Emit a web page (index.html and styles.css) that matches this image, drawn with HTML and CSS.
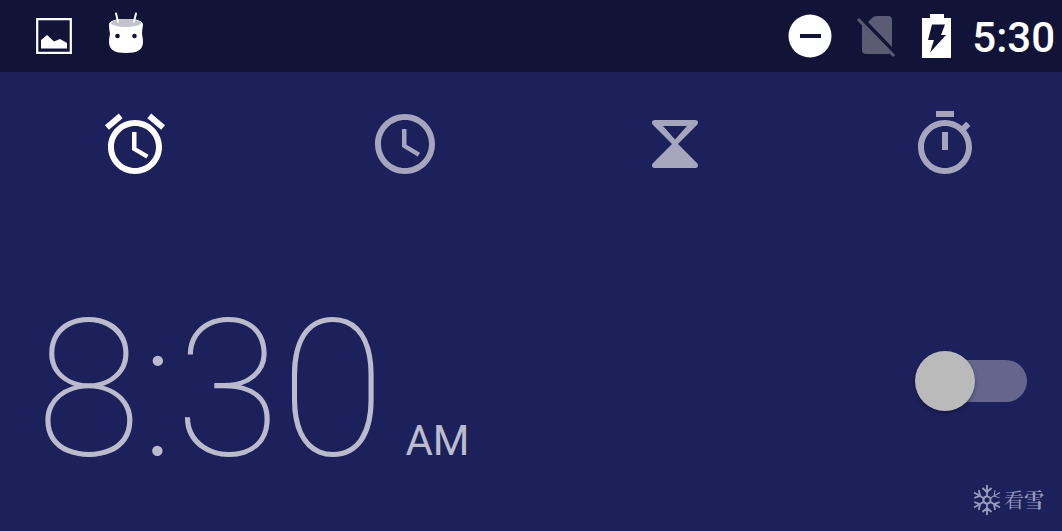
FILE: index.html
```html
<!DOCTYPE html>
<html lang="en">
<head>
<meta charset="utf-8">
<title>Clock</title>
<link rel="stylesheet" href="styles.css">
</head>
<body>
<header class="status-bar">
  <div class="status-group notifications">
    <svg class="icon-picture" viewBox="0 0 36 36" aria-hidden="true"><path d="M1.200 1.200h33.600v33.600H1.200z" fill="none" stroke="currentColor" stroke-width="2.200"/><path d="M5 30.500V22l6-5 7 6.500 6-2.500 7 4v5.500z" fill="currentColor"/></svg>
    <svg class="icon-android" viewBox="0 0 36 42" aria-hidden="true"><path d="M1 13C1 8 8 7 18 7s17 1 17 6q-1 5-1 9 1 5 1 8c0 8-6 11-17 11S1 38 1 30q0-4 1-8-1-5-1-9z" fill="currentColor"/><ellipse cx="18" cy="11" rx="15" ry="4" fill="#c3c3cd"/><path d="M8 1.500l2 8M28 1.500l-2 8" stroke="currentColor" stroke-width="2" stroke-linecap="round"/><circle cx="9.500" cy="24" r="2.300" fill="#121437"/><circle cx="26.500" cy="24" r="2.300" fill="#121437"/></svg>
  </div>
  <div class="status-group indicators">
    <svg class="icon-dnd" viewBox="0 0 44 44" aria-hidden="true"><circle cx="22" cy="22" r="21.500" fill="currentColor"/><path d="M12 22h21" stroke="#121437" stroke-width="4"/></svg>
    <svg class="icon-sim" viewBox="0 0 40 44" aria-hidden="true"><path d="M12 8l4-4q2-2 5-2h11q4 0 4 4v27zM6 11v25q0 4 4 4h22q1 0 2-1z" fill="currentColor"/><path d="M2 5l36 37" stroke="currentColor" stroke-width="3"/></svg>
    <svg class="icon-battery" viewBox="0 0 30 44" aria-hidden="true"><path d="M8 0h14v4h7v40H0V4h8z" fill="currentColor"/><path d="M10 10.500h13L19 21h5L8 38.500 12 26H6z" fill="#121437"/></svg>
    <time class="status-time">5:30</time>
  </div>
</header>
<main class="screen">
  <nav class="tabs" aria-label="Clock sections">
    <button class="tab tab-active" type="button" aria-label="Alarm"><svg viewBox="0 0 24 24"><path d="M22 5.720l-4.600-3.860-1.290 1.530 4.600 3.860L22 5.720zM7.880 3.390L6.600 1.860 2 5.710l1.290 1.530 4.590-3.850zM12.500 8H11v6l4.750 2.850.75-1.230-4-2.370V8zM12 4c-4.970 0-9 4.030-9 9s4.020 9 9 9c4.970 0 9-4.030 9-9s-4.030-9-9-9zm0 16c-3.870 0-7-3.130-7-7s3.130-7 7-7 7 3.130 7 7-3.130 7-7 7z"/></svg></button>
    <button class="tab" type="button" aria-label="Clock"><svg viewBox="0 0 24 24"><path d="M11.990 2C6.470 2 2 6.480 2 12s4.470 10 9.990 10C17.520 22 22 17.520 22 12S17.520 2 11.990 2zM12 20c-4.420 0-8-3.580-8-8s3.580-8 8-8 8 3.580 8 8-3.580 8-8 8zm.5-13H11v6l5.250 3.150.75-1.230-4.500-2.670z"/></svg></button>
    <button class="tab" type="button" aria-label="Timer"><svg viewBox="0 0 24 24"><path fill-rule="evenodd" d="M5.300 4h13.400c1 0 1.300 1 .6 1.700L13 12l6.300 6.300c.7.700.4 1.700-.6 1.700H5.300c-1 0-1.300-1-.6-1.700L11 12 4.700 5.700C4 5 4.300 4 5.300 4zM8 6l4 4.500L16 6z"/></svg></button>
    <button class="tab" type="button" aria-label="Stopwatch"><svg viewBox="0 0 24 24"><path d="M15 1H9v2h6V1zm-4 13h2V8h-2v6zm8.030-6.610l1.420-1.420c-.43-.51-.9-.99-1.410-1.410l-1.420 1.420C16.070 4.740 14.120 4 12 4c-4.970 0-9 4.030-9 9s4.020 9 9 9 9-4.030 9-9c0-2.120-.74-4.070-1.970-5.610zM12 20c-3.870 0-7-3.130-7-7s3.130-7 7-7 7 3.130 7 7-3.130 7-7 7z"/></svg></button>
  </nav>
  <section class="alarm">
    <label class="alarm-label" for="alarm-toggle"><span class="alarm-time">8:30</span><span class="alarm-period">AM</span></label>
    <input class="switch" id="alarm-toggle" type="checkbox" role="switch">
  </section>
</main>
<div class="watermark">
  <svg class="snowflake" viewBox="-15 -15 30 30" aria-hidden="true"><defs><path id="arm" d="M0-4V-15M0-8l-4.500-4M0-8l4.500-4M-3.500-2L0-4l3.500 2"/></defs><g fill="none" stroke="currentColor" stroke-width="1.800"><use href="#arm"/><use href="#arm" transform="rotate(60)" stroke-width="1"/><use href="#arm" transform="rotate(120)"/><use href="#arm" transform="rotate(180)"/><use href="#arm" transform="rotate(240)"/><use href="#arm" transform="rotate(300)"/></g></svg>
  <span class="watermark-text" lang="zh">看<b>雪</b></span>
</div>
</body>
</html>
```
FILE: styles.css
```css
* { box-sizing: border-box; }
body {
  margin: 0;
  min-height: 100vh;
  position: relative;
  background: #1d215b;
  color: #fff;
  font-family: Roboto, "Liberation Sans", sans-serif;
}
svg { display: block; }
.status-bar {
  display: flex;
  justify-content: space-between;
  align-items: center;
  height: 72px;
  padding: 0 7px 0 36px;
  background: #121437;
}
.status-group { display: flex; align-items: center; }
.notifications { gap: 36px; }
.icon-picture { width: 36px; height: 36px; }
.icon-android { width: 36px; height: 42px; margin-bottom: 6px; }
.icon-dnd { width: 44px; height: 44px; margin-right: 24px; }
.icon-sim { width: 40px; height: 44px; margin-right: 26px; color: #5b5c73; }
.icon-battery { width: 30px; height: 44px; margin-right: 20px; }
.status-time { font-size: 42px; line-height: 48px; font-weight: 500; padding-top: 4px; }
.tabs {
  display: flex;
  justify-content: space-between;
  padding: 36px 81px 0 99px;
}
.tab {
  width: 72px;
  height: 72px;
  padding: 0;
  border: 0;
  background: none;
  color: #a5a6be;
}
.tab svg { width: 100%; fill: currentColor; }
.tab-active { color: #fff; }
.alarm {
  display: flex;
  justify-content: space-between;
  align-items: center;
  padding: 79px 35px 0 36px;
}
.alarm-label {
  display: flex;
  align-items: baseline;
  gap: 20px;
  padding-top: 18px;
  color: #bbbbce;
}
.alarm-time { font-size: 192px; line-height: 225px; font-weight: 100; }
.alarm-period { font-size: 42px; }
.switch {
  appearance: none;
  position: relative;
  display: flex;
  align-items: center;
  width: 112px;
  height: 60px;
  margin: 0;
}
.switch::before {
  content: "";
  z-index: 1;
  width: 60px;
  height: 60px;
  border-radius: 50%;
  background: #bababa;
  box-shadow: 0 2px 4px #0005;
}
.switch::after {
  content: "";
  position: absolute;
  inset: 9px 0 9px 16px;
  border-radius: 21px;
  background: #64668e;
}
.switch:checked { flex-direction: row-reverse; }
.watermark {
  position: absolute;
  right: 18px;
  bottom: 16px;
  display: flex;
  align-items: center;
  gap: 2px;
  color: #9a9cbb;
}
.watermark-text { font: 20px/30px "Noto Serif CJK SC", "Noto Sans CJK SC", serif; }
.snowflake { width: 30px; height: 30px; }
```
